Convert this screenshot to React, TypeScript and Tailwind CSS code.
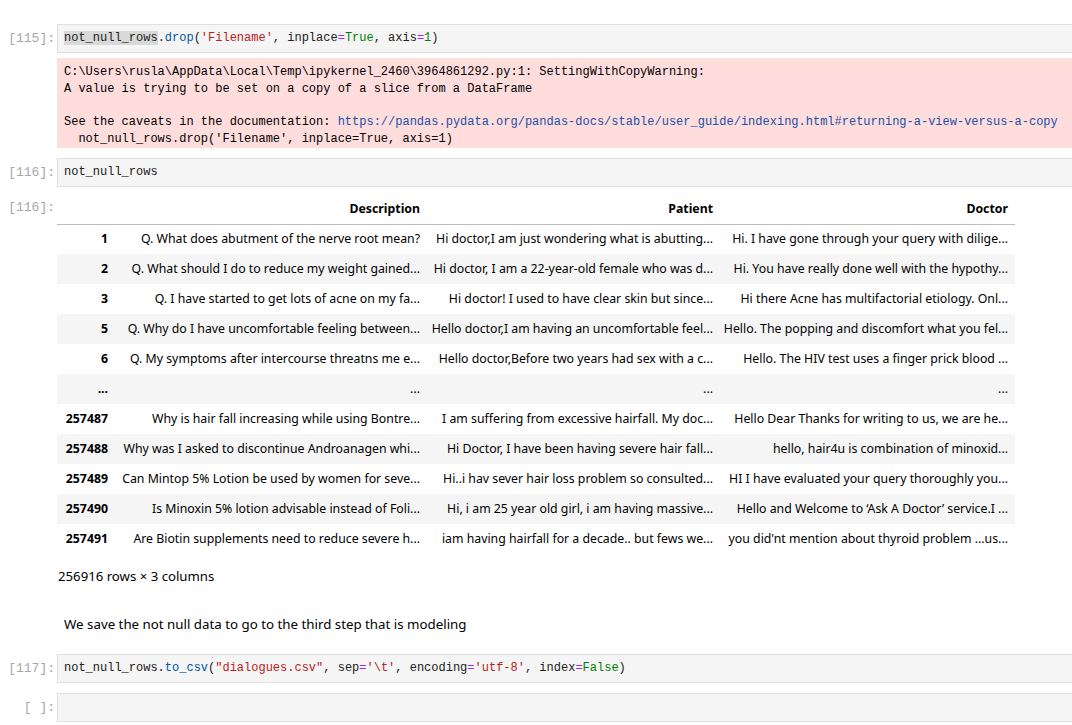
import React from "react";

const mono = "font-['Liberation_Mono',monospace]";
const sans = "font-['Noto_Sans',sans-serif]";

const rows: [string, string, string, string][] = [
  ["1", "Q. What does abutment of the nerve root mean?", "Hi doctor,I am just wondering what is abutting...", "Hi. I have gone through your query with dilige..."],
  ["2", "Q. What should I do to reduce my weight gained...", "Hi doctor, I am a 22-year-old female who was d...", "Hi. You have really done well with the hypothy..."],
  ["3", "Q. I have started to get lots of acne on my fa...", "Hi doctor! I used to have clear skin but since...", "Hi there Acne has multifactorial etiology. Onl..."],
  ["5", "Q. Why do I have uncomfortable feeling between...", "Hello doctor,I am having an uncomfortable feel...", "Hello. The popping and discomfort what you fel..."],
  ["6", "Q. My symptoms after intercourse threatns me e...", "Hello doctor,Before two years had sex with a c...", "Hello. The HIV test uses a finger prick blood ..."],
  ["...", "...", "...", "..."],
  ["257487", "Why is hair fall increasing while using Bontre...", "I am suffering from excessive hairfall. My doc...", "Hello Dear Thanks for writing to us, we are he..."],
  ["257488", "Why was I asked to discontinue Androanagen whi...", "Hi Doctor, I have been having severe hair fall...", "hello, hair4u is combination of minoxid..."],
  ["257489", "Can Mintop 5% Lotion be used by women for seve...", "Hi..i hav sever hair loss problem so consulted...", "HI I have evaluated your query thoroughly you..."],
  ["257490", "Is Minoxin 5% lotion advisable instead of Foli...", "Hi, i am 25 year old girl, i am having massive...", "Hello and Welcome to \u2018Ask A Doctor\u2019 service.I ..."],
  ["257491", "Are Biotin supplements need to reduce severe h...", "iam having hairfall for a decade.. but fews we...", "you did'nt mention about thyroid problem ...us..."],
];

function Prompt({ label }: { label: string }) {
  return (
    <div className={`w-[57px] shrink-0 pr-[2px] text-right text-[13px] leading-[29px] text-[#a8a8a8] ${mono}`}>
      {label}
    </div>
  );
}

function InputCell({ children }: { children?: React.ReactNode }) {
  return (
    <div className={`h-[29px] flex-1 border border-r-0 border-[#e0e0e0] bg-[#f5f5f5] px-[6px] text-[12px] leading-[27px] text-[#212121] whitespace-pre ${mono}`}>
      {children}
    </div>
  );
}

const M = ({ children }: { children: React.ReactNode }) => <span className="text-[#0055aa]">{children}</span>;
const S = ({ children }: { children: React.ReactNode }) => <span className="text-[#ba2121]">{children}</span>;
const O = ({ children }: { children: React.ReactNode }) => <span className="text-[#aa22ff]">{children}</span>;
const K = ({ children }: { children: React.ReactNode }) => <span className="text-[#008000]">{children}</span>;

export default function App() {
  return (
    <div className="min-h-[725px] w-[1072px] overflow-hidden bg-white pt-[24px]">
      {/* [115] */}
      <div className="flex">
        <Prompt label="[115]:" />
        <InputCell>
          <span className="bg-[#d9d9d9]">not_null_rows</span>.<M>drop</M>(<S>'Filename'</S>, inplace<O>=</O><K>True</K>, axis<O>=</O><K>1</K>)
        </InputCell>
      </div>
      <div className="mt-[5px] flex">
        <div className="w-[57px] shrink-0" />
        <div className={`h-[90px] flex-1 bg-[#ffdddd] px-[7px] pt-[6px] text-[12px] leading-[16.75px] text-[#000] whitespace-pre ${mono}`}>
          <div>C:\Users\rusla\AppData\Local\Temp\ipykernel_2460\3964861292.py:1: SettingWithCopyWarning:</div>
          <div>A value is trying to be set on a copy of a slice from a DataFrame</div>
          <div>&nbsp;</div>
          <div>
            See the caveats in the documentation:{" "}
            <span className="text-[#2150a8]">https://pandas.pydata.org/pandas-docs/stable/user_guide/indexing.html#returning-a-view-versus-a-copy</span>
          </div>
          <div>  not_null_rows.drop('Filename', inplace=True, axis=1)</div>
        </div>
      </div>

      {/* [116] */}
      <div className="mt-[10px] flex">
        <Prompt label="[116]:" />
        <InputCell>not_null_rows</InputCell>
      </div>
      <div className="mt-[5px] flex">
        <div className={`w-[57px] shrink-0 pr-[2px] pt-[1px] text-right text-[13px] leading-[30px] text-[#a8a8a8] ${mono}`}>[116]:</div>
        <div className={`flex-1 pt-[2px] text-[12.3px] text-[#000] ${sans}`}>
          <table className="w-[958px] table-fixed border-collapse">
            <colgroup>
              <col className="w-[58px]" />
              <col className="w-[312px]" />
              <col className="w-[293px]" />
              <col className="w-[295px]" />
            </colgroup>
            <thead>
              <tr className="h-[30px] border-b border-[#bdbdbd]">
                <th className="pr-[7px] text-right font-bold"></th>
                <th className="pr-[7px] text-right font-bold">Description</th>
                <th className="pr-[7px] text-right font-bold">Patient</th>
                <th className="pr-[7px] text-right font-bold">Doctor</th>
              </tr>
            </thead>
            <tbody>
              {rows.map((r, i) => (
                <tr key={i} className={`h-[30px] ${i % 2 === 1 ? "bg-[#f5f5f5]" : "bg-white"}`}>
                  <th className="whitespace-nowrap pr-[7px] text-right font-bold">{r[0]}</th>
                  <td className="whitespace-nowrap pr-[7px] text-right">{r[1]}</td>
                  <td className="whitespace-nowrap pr-[7px] text-right">{r[2]}</td>
                  <td className="whitespace-nowrap pr-[7px] text-right">{r[3]}</td>
                </tr>
              ))}
            </tbody>
          </table>
          <div className="mt-[14px] pl-[1px] text-[13.2px] leading-[17px]">256916 rows × 3 columns</div>
        </div>
      </div>

      {/* markdown */}
      <div className="mt-[30px] flex">
        <div className="w-[57px] shrink-0" />
        <div className={`px-[7px] text-[13.3px] leading-[18px] text-[#000] ${sans}`}>
          We save the not null data to go to the third step that is modeling
        </div>
      </div>

      {/* [117] */}
      <div className="mt-[21px] flex">
        <Prompt label="[117]:" />
        <InputCell>
          not_null_rows.<M>to_csv</M>(<S>"dialogues.csv"</S>, sep<O>=</O><S>'\t'</S>, encoding<O>=</O><S>'utf-8'</S>, index<O>=</O><K>False</K>)
        </InputCell>
      </div>

      {/* [ ] */}
      <div className="mt-[10px] flex">
        <Prompt label="[ ]:" />
        <InputCell />
      </div>
    </div>
  );
}
